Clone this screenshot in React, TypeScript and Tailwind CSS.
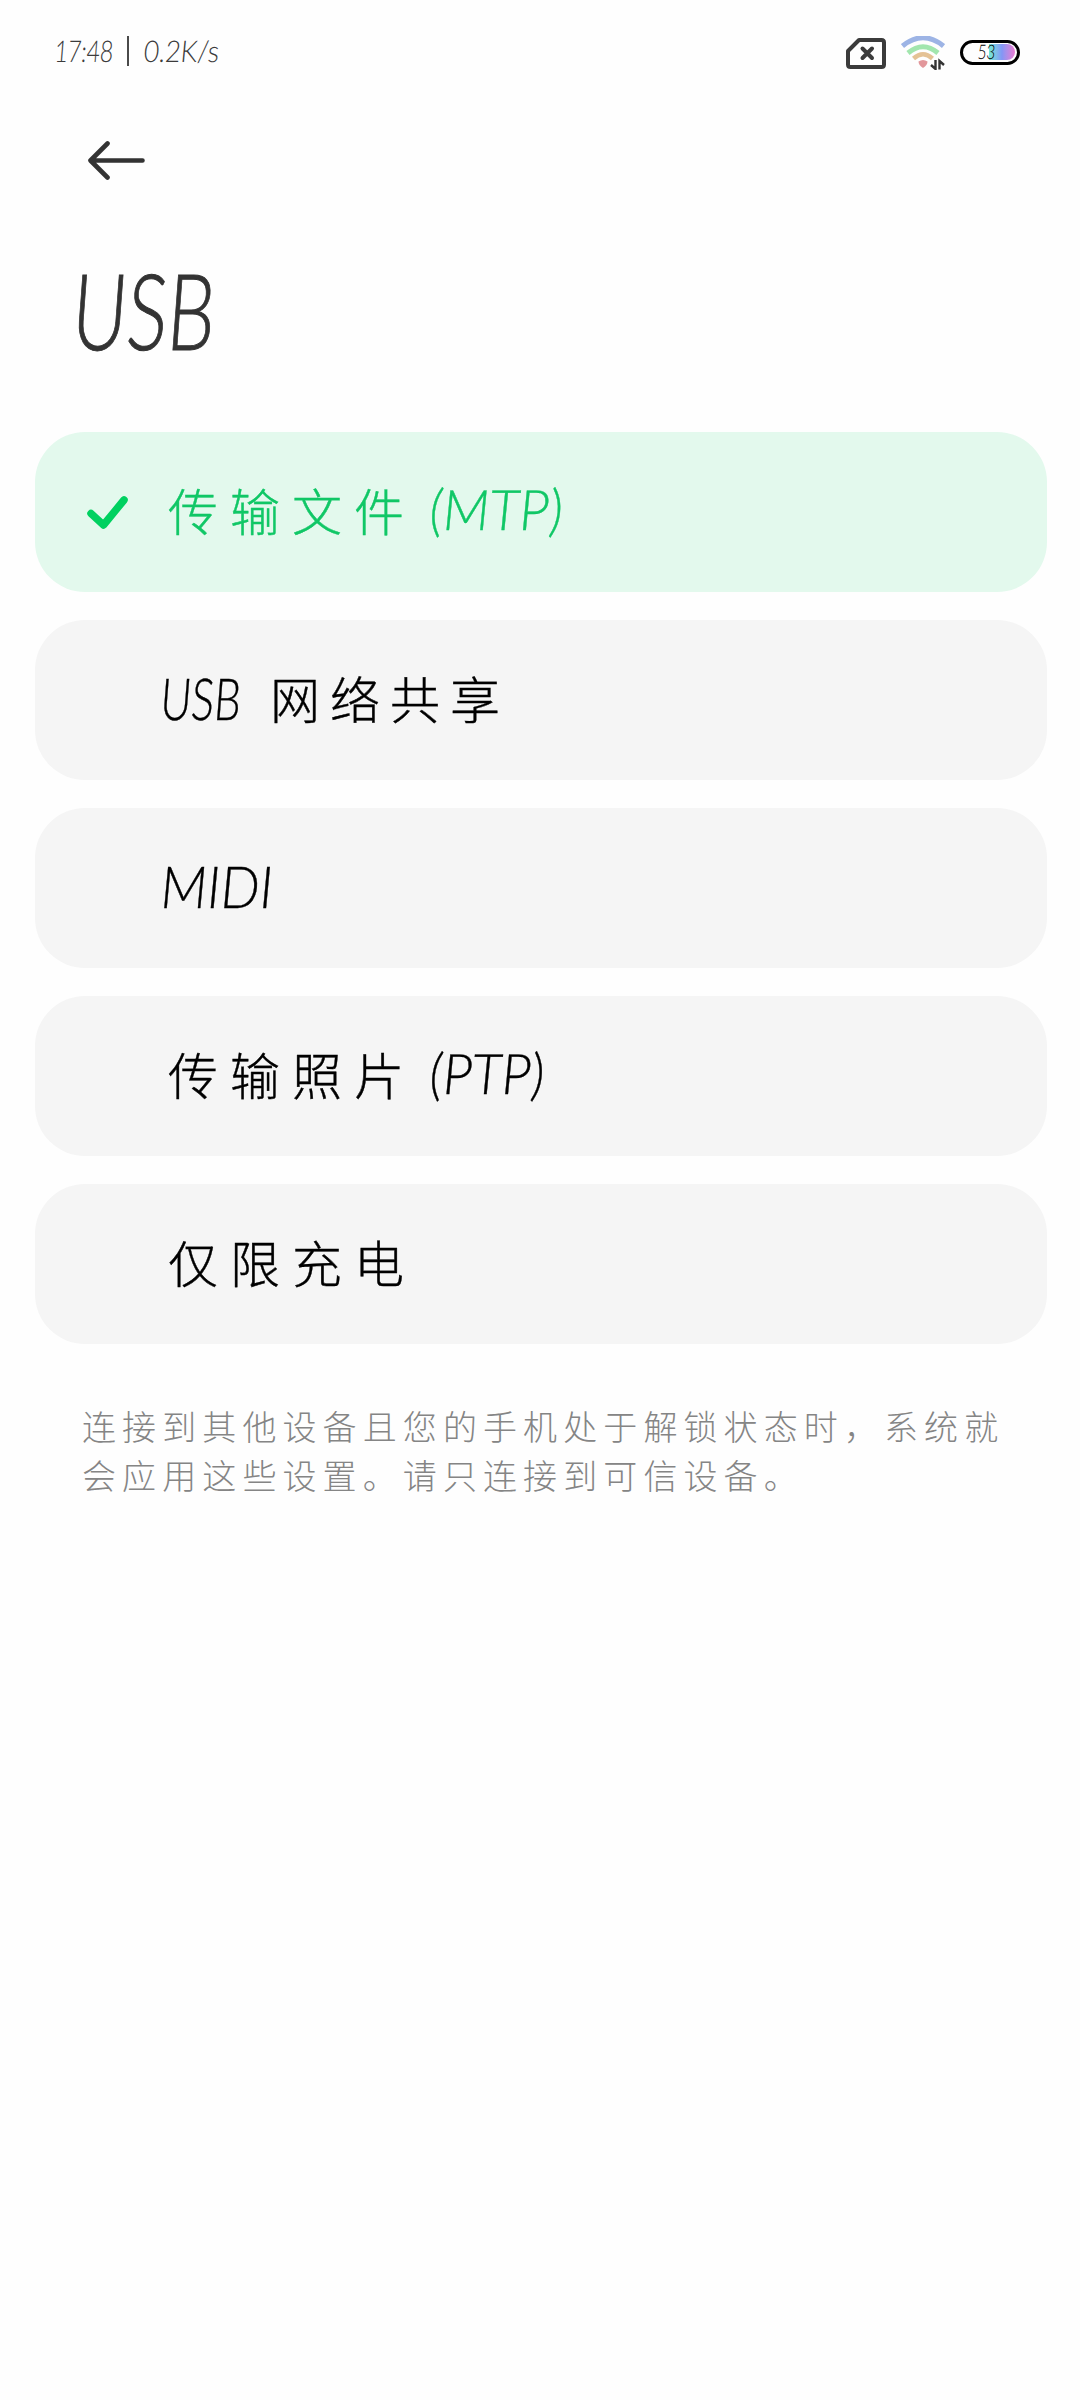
import type { ReactNode } from 'react';

function Latin({ box, text, children }: { box: string; text: string; children: ReactNode }) {
  return (
    <span className={`block shrink-0 whitespace-nowrap font-[Lato,sans-serif] ${box}`}>
      <span className={`inline-block origin-left ${text}`}>{children}</span>
    </span>
  );
}

function Han({ spacing = 'tracking-[12px]', children }: { spacing?: string; children: ReactNode }) {
  return <span className={`block shrink-0 whitespace-nowrap text-[50px] font-light leading-[60px] ${spacing}`}>{children}</span>;
}

function Row({ active = false, children }: { active?: boolean; children: ReactNode }) {
  return (
    <li
      className={`flex h-40 items-center rounded-[50px] ${active ? 'bg-[#e3f9ed] text-[#10c766]' : 'bg-[#f5f5f5] text-black'}`}
    >
      <span className="flex w-[126px] shrink-0 pl-[52px]">
        {active && (
          <svg width="42" height="34" viewBox="0 0 42 34" fill="none" stroke="#00d160" strokeWidth="7.5" strokeLinecap="round" strokeLinejoin="round">
            <path d="M4 18.5 16.5 30 37 5" />
          </svg>
        )}
      </span>
      <span className="flex items-center pb-[6px] [-webkit-text-stroke:0.4px_currentColor]">{children}</span>
    </li>
  );
}

function StatusBar() {
  return (
    <header className="flex h-[104px] items-center pl-[55px] pr-[60px] text-[#3b3b3b]">
      <Latin box="w-[72px] pb-[4px]" text="text-[30px] font-light scale-x-[0.76] -skew-x-6">17:48</Latin>
      <span className="mb-[2px] h-[30px] w-[2px] bg-[#4a4a4a]" />
      <Latin box="w-[90px] pl-[15px] pb-[4px]" text="text-[30px] font-light scale-x-[0.88] -skew-x-6">0.2K/s</Latin>
      <div className="ml-auto flex items-center">
        <svg className="mt-[2px]" width="40" height="31" viewBox="0 0 40 31" fill="none" stroke="#3b3b3b" strokeWidth="4" strokeLinejoin="round">
          <path d="M13 2H35.5Q38 2 38 4.500V26.500Q38 29 35.500 29H4.500Q2 29 2 26.500V13Z" />
          <path d="m16.500 10.500 9.500 9.500m0-9.500-9.500 9.500" strokeLinecap="round" />
        </svg>
        <svg className="ml-[15px] mt-[2px]" width="44" height="34" viewBox="0 0 44 34" fill="none">
          <path d="M1.500 10Q22-6.500 42.500 10" stroke="#9db4e5" strokeWidth="5" />
          <path d="M7 17Q22 4.500 37 17" stroke="#a2e6ae" strokeWidth="5" />
          <path d="M12.500 22.500Q22 14 31.500 22.500" stroke="#e4c295" strokeWidth="4.500" />
          <path d="M17.500 25.500Q22 22.500 26.500 25.500Q26.500 29 22 32Q17.500 29 17.500 25.500Z" fill="#e2979b" />
          <path d="M34.500 24V33L30 29M38.500 33.500V25L43 29" stroke="#333" strokeWidth="2.400" />
        </svg>
        <span className="relative ml-[15px] flex h-[25px] w-[60px] items-center rounded-full border-[3px] border-black p-[2px]">
          <span className="ml-[24px] h-[16px] w-[28px] rounded-r-full bg-linear-to-r from-[#74e9d4] via-[#8396f5] via-50% to-[#e879d1]" />
          <span className="absolute left-[15px] top-[-2px] block w-[20px] whitespace-nowrap font-[Lato,sans-serif] text-[20px] font-light leading-[20px] text-black">
            <span className="inline-block origin-left scale-x-[0.75] -skew-x-6">53</span>
          </span>
        </span>
      </div>
    </header>
  );
}

export default function App() {
  return (
    <main className="h-[2400px] w-[1080px] overflow-hidden bg-[#fefefe] font-['Noto_Sans_CJK_SC',sans-serif]">
      <StatusBar />
      <div className="flex h-[112px] pl-[87px] pt-[36px]">
        <svg width="60" height="40" viewBox="0 0 60 40" fill="none" stroke="#333" strokeWidth="4.600" strokeLinecap="round" strokeLinejoin="round">
          <path d="M20.500 3.500 3.500 20.500l17 17M4 20.500h51.500" />
        </svg>
      </div>
      <h1 className="h-[216px] pl-[73px] pt-[29px] text-[#333]">
        <Latin box="" text="text-[106px] leading-[128px] font-light [-webkit-text-stroke:1px_#333] scale-x-[0.71] -skew-x-6">USB</Latin>
      </h1>
      <ul className="mx-[35px] flex w-[1012px] flex-col gap-7">
        <Row active>
          <span className="w-[7px]" />
          <Han>传输文件</Han>
          <Latin box="ml-[14px]" text="text-[56px] font-light scale-x-[0.92] -skew-x-6">(MTP)</Latin>
        </Row>
        <Row>
          <Latin box="w-[109px]" text="text-[58px] font-light scale-x-[0.73] -skew-x-6">USB</Latin>
          <Han spacing="tracking-[10px]">网络共享</Han>
        </Row>
        <Row>
          <Latin box="" text="text-[58px] font-light scale-x-[0.885] -skew-x-6">MIDI</Latin>
        </Row>
        <Row>
          <span className="w-[7px]" />
          <Han>传输照片</Han>
          <Latin box="ml-[14px]" text="text-[56px] font-light scale-x-[0.91] -skew-x-6">(PTP)</Latin>
        </Row>
        <Row>
          <span className="w-[7px]" />
          <Han>仅限充电</Han>
        </Row>
      </ul>
      <p className="whitespace-nowrap pl-[82px] pt-[57px] text-[34px] font-light leading-[49px] tracking-[6.1px] text-[#858585]">
        连接到其他设备且您的手机处于解锁状态时，系统就
        <br />
        会应用这些设置。请只连接到可信设备。
      </p>
    </main>
  );
}
